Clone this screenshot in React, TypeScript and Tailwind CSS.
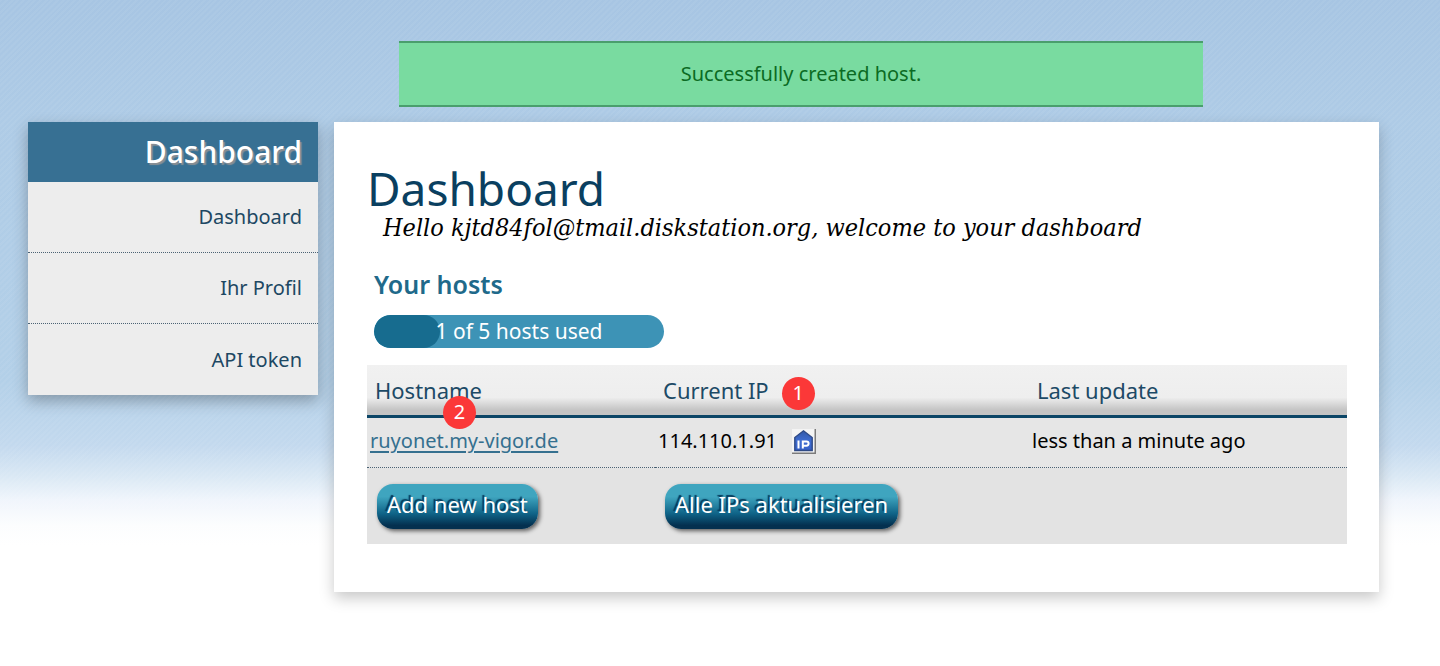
import type { ReactNode } from "react";

const navItems = ["Dashboard", "Ihr Profil", "API token"];

function Badge({ children, place }: { children: ReactNode; place: string }) {
  return (
    <span
      className={`absolute flex size-[33px] items-center justify-center rounded-full bg-[#fb3838] text-[20px] leading-none text-white ${place}`}
    >
      {children}
    </span>
  );
}

function ActionButton({ children }: { children: ReactNode }) {
  return (
    <button
      type="button"
      className="block h-[45px] rounded-[16px] bg-[linear-gradient(to_bottom,#3fa5bf_0%,#3fa5bf_28%,#0f6387_66%,#04304f_92%,#04304f_100%)] px-[10px] pb-1 text-[22px] leading-none whitespace-nowrap text-white shadow-[2px_2px_4px_rgba(0,0,0,0.6)] [text-shadow:-2px_-2px_1px_#04395a]"
    >
      {children}
    </button>
  );
}

function IpIcon() {
  return (
    <svg viewBox="0 0 24 25" className="h-[25px] w-6" role="img" aria-label="IP">
      <defs>
        <linearGradient id="house" x1="0" y1="0" x2="0" y2="1">
          <stop offset="0" stopColor="#3158a8" />
          <stop offset="0.5" stopColor="#3f6cd0" />
          <stop offset="1" stopColor="#3560c8" />
        </linearGradient>
      </defs>
      <rect width="24" height="25" fill="#7b7b7b" />
      <rect width="22.5" height="23.5" fill="#f4f4f4" />
      <path d="M2.800 21.500V8.500L11.500 1.800l8.700 6.700v13z" fill="url(#house)" stroke="#2f4a86" strokeWidth="1.400" />
      <path d="M6.500 11.500v8M10.800 19.500v-7h3.700a2.100 2.100 0 0 1 0 4.200h-3.700" fill="none" stroke="#fff" strokeWidth="2" />
    </svg>
  );
}

export default function App() {
  return (
    <div className="min-h-screen bg-white bg-[repeating-linear-gradient(135deg,rgba(255,255,255,0.05)_0px,rgba(255,255,255,0.05)_2px,transparent_2px,transparent_4px),linear-gradient(to_bottom,#a7c5e3_0px,#aecbe6_120px,#b3d0e8_380px,#c3d9ee_445px,#d9e8f4_475px,#f0f5fc_500px,#fcfdfe_525px,#ffffff_545px)] pt-[41px] pr-[61px] pb-[74px] pl-7 font-['Noto_Sans','Open_Sans',sans-serif] text-[20px] text-black">
      <div
        role="status"
        className="mr-[176px] mb-[15px] ml-[371px] flex h-[66px] items-center justify-center border-y-2 border-[#4a9e6d] bg-[#79dba0] text-[#0b6b23]"
      >
        Successfully created host.
      </div>

      <div className="flex items-start gap-4">
        <aside className="w-[290px] shrink-0 bg-[#ededed] text-right shadow-[0_6px_14px_rgba(0,0,0,0.28)]">
          <h2 className="flex h-[60px] items-center justify-end bg-[#377093] pr-4 text-[30px] leading-none font-medium text-white [text-shadow:2px_2px_1px_#8a8f94]">
            Dashboard
          </h2>
          <nav>
            <ul className="divide-y divide-dotted divide-[#4b6274]">
              {navItems.map((item) => (
                <li key={item} className="flex h-[71px] flex-col">
                  <a href="#" className="flex flex-1 items-center justify-end pr-4 text-[#1d4863]">
                    {item}
                  </a>
                </li>
              ))}
            </ul>
          </nav>
        </aside>

        <main className="min-w-0 flex-1 bg-white pt-10 pr-8 pb-12 pl-[33px] shadow-[0_6px_14px_rgba(0,0,0,0.22)]">
          <h1 className="text-[46px] leading-[52px] text-[#0a3f60]">Dashboard</h1>
          <p className="ml-4 font-['DejaVu_Serif_Condensed','DejaVu_Serif',serif] text-[25px] leading-7 italic">
            Hello kjtd84fol@tmail.diskstation.org, welcome to your dashboard
          </p>

          <h2 className="mt-6 ml-[7px] text-[25px] leading-9 font-semibold text-[#20698a]">Your hosts</h2>
          <div
            role="progressbar"
            aria-label="Hosts used"
            aria-valuemin={0}
            aria-valuemax={5}
            aria-valuenow={1}
            className="relative mt-[13px] ml-[7px] flex h-[33px] w-[290px] items-center justify-center overflow-hidden rounded-full bg-[#3d93b6] text-[21px] text-white"
          >
            <span className="absolute inset-y-0 left-0 w-[66px] rounded-full bg-[#176c8f]" />
            <span className="relative">1 of 5 hosts used</span>
          </div>

          <table className="mt-[17px] w-full table-fixed border-separate border-spacing-0 bg-[#e3e3e3] text-left">
            <colgroup>
              <col className="w-[288px]" />
              <col className="w-[374px]" />
              <col />
            </colgroup>
            <thead className="text-[22px] text-[#1d4a66] [&_th]:h-[53px] [&_th]:border-b-3 [&_th]:border-[#0b4566] [&_th]:bg-[linear-gradient(to_bottom,#f1f1f1_0%,#eeeeee_65%,#c4c4c4_90%,#c4c4c4_100%)] [&_th]:px-2 [&_th]:font-normal">
              <tr>
                <th scope="col">
                  <span className="relative">
                    Hostname
                    <Badge place="top-[21px] left-[68px]">2</Badge>
                  </span>
                </th>
                <th scope="col">
                  <span className="relative">
                    Current IP
                    <Badge place="top-[2px] left-full ml-[13px]">1</Badge>
                  </span>
                </th>
                <th scope="col">Last update</th>
              </tr>
            </thead>
            <tbody className="[&_td]:h-[50px] [&_td]:border-b [&_td]:border-dotted [&_td]:border-[#4b6274] [&_td]:bg-[#e6e6e6] [&_td]:px-[3px] [&_td]:pb-[3px]">
              <tr>
                <td>
                  <a href="#" className="text-[#35708f] underline underline-offset-3">
                    ruyonet.my-vigor.de
                  </a>
                </td>
                <td>
                  <span className="flex items-center gap-[15px]">
                    114.110.1.91
                    <IpIcon />
                  </span>
                </td>
                <td>less than a minute ago</td>
              </tr>
            </tbody>
            <tfoot>
              <tr className="h-[76px]">
                <td className="px-[10px]">
                  <ActionButton>Add new host</ActionButton>
                </td>
                <td className="px-[10px]">
                  <ActionButton>Alle IPs aktualisieren</ActionButton>
                </td>
                <td />
              </tr>
            </tfoot>
          </table>
        </main>
      </div>
    </div>
  );
}
